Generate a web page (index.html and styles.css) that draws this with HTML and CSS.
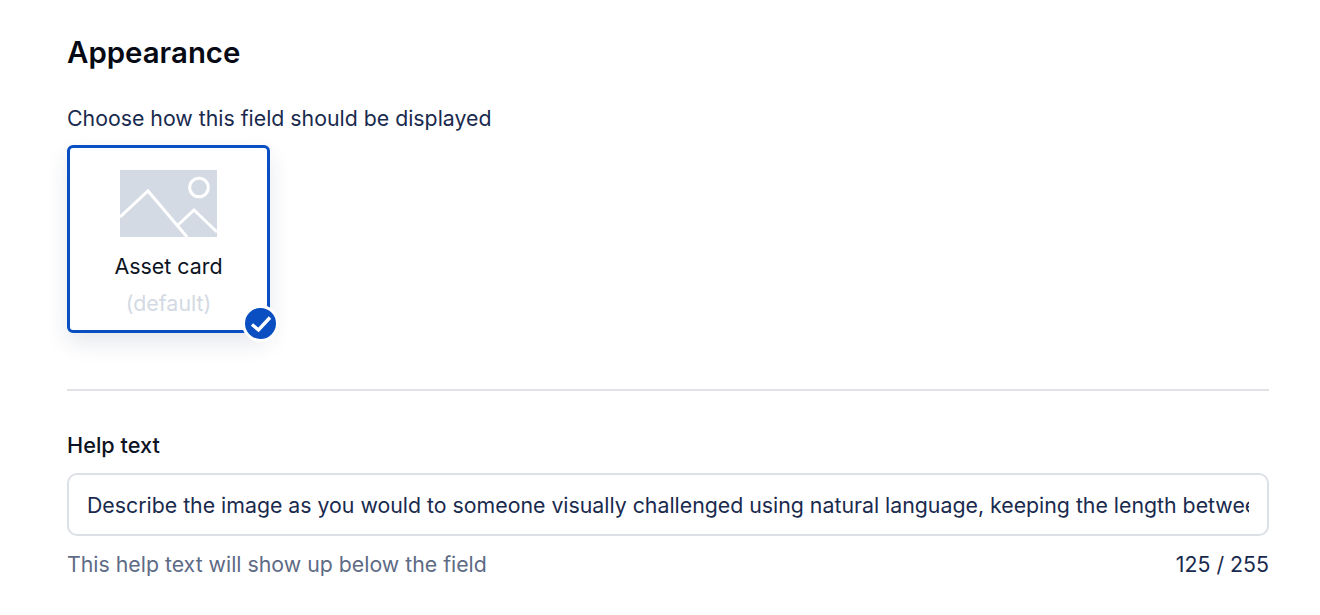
FILE: index.html
```html
<!DOCTYPE html>
<html lang="en">
<head>
<meta charset="UTF-8">
<title>Appearance</title>
<link rel="stylesheet" href="styles.css">
</head>
<body>
<div class="container">
<h2 class="title">Appearance</h2>
<p class="hint">Choose how this field should be displayed</p>
<div class="card">
<svg class="card-icon" width="97" height="67" viewBox="0 0 97 67">
<rect width="97" height="67" fill="#d3dae3"/>
<circle cx="79" cy="17.5" r="9.3" fill="none" stroke="#fff" stroke-width="3"/>
<path d="M0 47 L28 21 L67 67 M58 55 L74 40 L97 62" fill="none" stroke="#fff" stroke-width="3"/>
</svg>
<div class="card-name">Asset card</div>
<div class="card-note">(default)</div>
<span class="card-check">
<svg width="22" height="18" viewBox="0 0 22 18"><path d="M2 9.5 L8.5 15 L20 2.5" fill="none" stroke="#fff" stroke-width="3.4"/></svg>
</span>
</div>
<hr class="divider">
<label class="label" for="helpText">Help text</label>
<input class="text-input" id="helpText" type="text" value="Describe the image as you would to someone visually challenged using natural language, keeping the length between 125 and 255 characters long">
<div class="field-foot">
<span class="foot-hint">This help text will show up below the field</span>
<span class="counter">125 / 255</span>
</div>
</div>
</body>
</html>
```

FILE: styles.css
```css
*{margin:0;padding:0;box-sizing:border-box}
body{font-family:Inter,"Liberation Sans",sans-serif;background:#fff;color:#192a4e}
.container{width:1202px;margin-left:67px;padding-top:35px}
.title{font-size:29.4px;line-height:36px;font-weight:600;color:#060a14}
.hint{font-size:21.3px;line-height:30px;margin-top:32px}
.card{position:relative;width:203px;height:188px;margin-top:12px;border:3px solid #0a4fc2;border-radius:6px;background:#fff;box-shadow:0 10px 22px rgba(30,50,80,0.11);padding-top:22px;display:flex;flex-direction:column;align-items:center}
.card-icon{display:block}
.card-name{font-size:21.4px;line-height:28px;color:#0c1322;margin-top:15px}
.card-note{font-size:21.4px;line-height:28px;color:#d3dae3;margin-top:9px}
.card-check{position:absolute;right:-12px;bottom:-12px;width:37px;height:37px;border-radius:50%;background:#0a4fc2;border:3px solid #fff;display:flex;align-items:center;justify-content:center}
.divider{border:none;border-top:2px solid #e0e2e5;margin-top:56px}
.label{display:block;font-size:21.7px;line-height:28px;font-weight:450;color:#0c1322;margin-top:40px}
.text-input{display:block;width:100%;height:63px;margin-top:14px;border:2px solid #dde1e6;border-radius:10px;padding:0 18px;font-family:inherit;font-size:21.3px;color:#192a4e;background:#fff;outline:none}
.field-foot{display:flex;justify-content:space-between;font-size:21.3px;line-height:30px;margin-top:13px}
.foot-hint{color:#5e6b85}
.counter{color:#192a4e}
```
